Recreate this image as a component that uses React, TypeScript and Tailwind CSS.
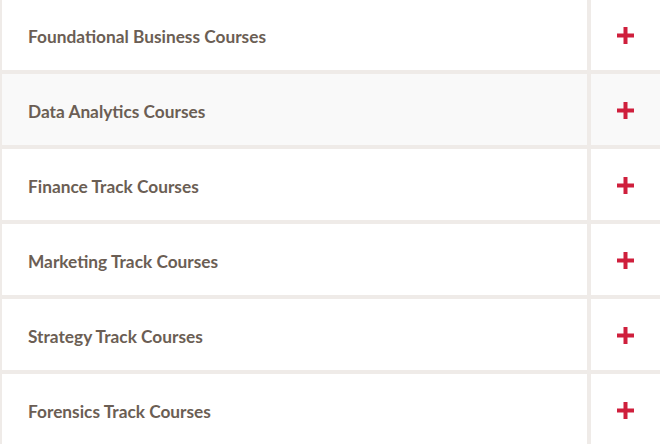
import React from 'react';

const courses = [
  'Foundational Business Courses',
  'Data Analytics Courses',
  'Finance Track Courses',
  'Marketing Track Courses',
  'Strategy Track Courses',
  'Forensics Track Courses',
];

function Plus() {
  return (
    <svg width="17" height="17" viewBox="0 0 17 17" aria-hidden="true">
      <rect x="6.5" y="0" width="4" height="17" fill="#cf1f3c" />
      <rect x="0" y="6.5" width="17" height="4" fill="#cf1f3c" />
    </svg>
  );
}

export default function App() {
  return (
    <div className="w-[660px] h-[444px] overflow-hidden bg-[#efebe8]" style={{ fontFamily: 'Lato, "Open Sans", sans-serif' }}>
      <div className="flex flex-col gap-[4px] mt-[-1px] pl-[2px]">
        {courses.map((c, i) => (
          <div key={c} className="flex h-[71px] gap-[4px]">
            <div className={`flex items-center w-[585px] pl-[26px] ${i === 1 ? 'bg-[#f9f9f9]' : 'bg-white'}`}>
              <span className="text-[17.3px] font-bold text-[#6b5e54] pt-[4px]">{c}</span>
            </div>
            <div className={`flex flex-1 items-center justify-center pt-[2px] ${i === 1 ? 'bg-[#f9f9f9]' : 'bg-white'}`}>
              <Plus />
            </div>
          </div>
        ))}
      </div>
    </div>
  );
}
